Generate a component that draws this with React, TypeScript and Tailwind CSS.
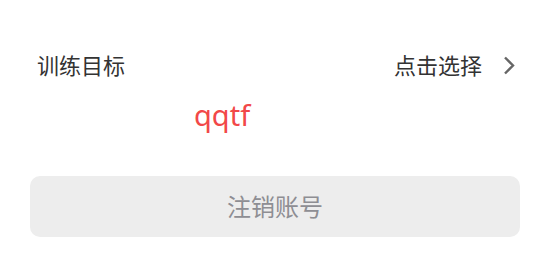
export default function App() {
  return (
    <div
      className="w-[550px] h-[275px] bg-white overflow-hidden"
      style={{ fontFamily: '"Noto Sans", "Noto Sans CJK SC", sans-serif' }}
    >
      <div className="pt-[50px] pl-[37px] pr-[35px] flex items-center justify-between h-[80px]">
        <span className="text-[22px] leading-[30px] text-[#333333]">训练目标</span>
        <button className="flex items-center gap-[21px] text-[22px] leading-[30px] text-[#333333]">
          点击选择
          <svg width="12" height="19" viewBox="0 0 12 19" fill="none" className="text-[#666666]">
            <path d="M2 1.5L10 9.5L2 17.5" stroke="currentColor" strokeWidth="2.4" />
          </svg>
        </button>
      </div>

      <div className="pl-[194px] pt-[16px] h-[96px]">
        <span className="text-[29px] leading-[38px] text-[#f24848]">qqtf</span>
      </div>

      <div className="px-[30px]">
        <button className="w-full h-[61px] rounded-[10px] bg-[#ededed] text-[24px] text-[#8e8e93] flex items-center justify-center">
          注销账号
        </button>
      </div>
    </div>
  );
}
